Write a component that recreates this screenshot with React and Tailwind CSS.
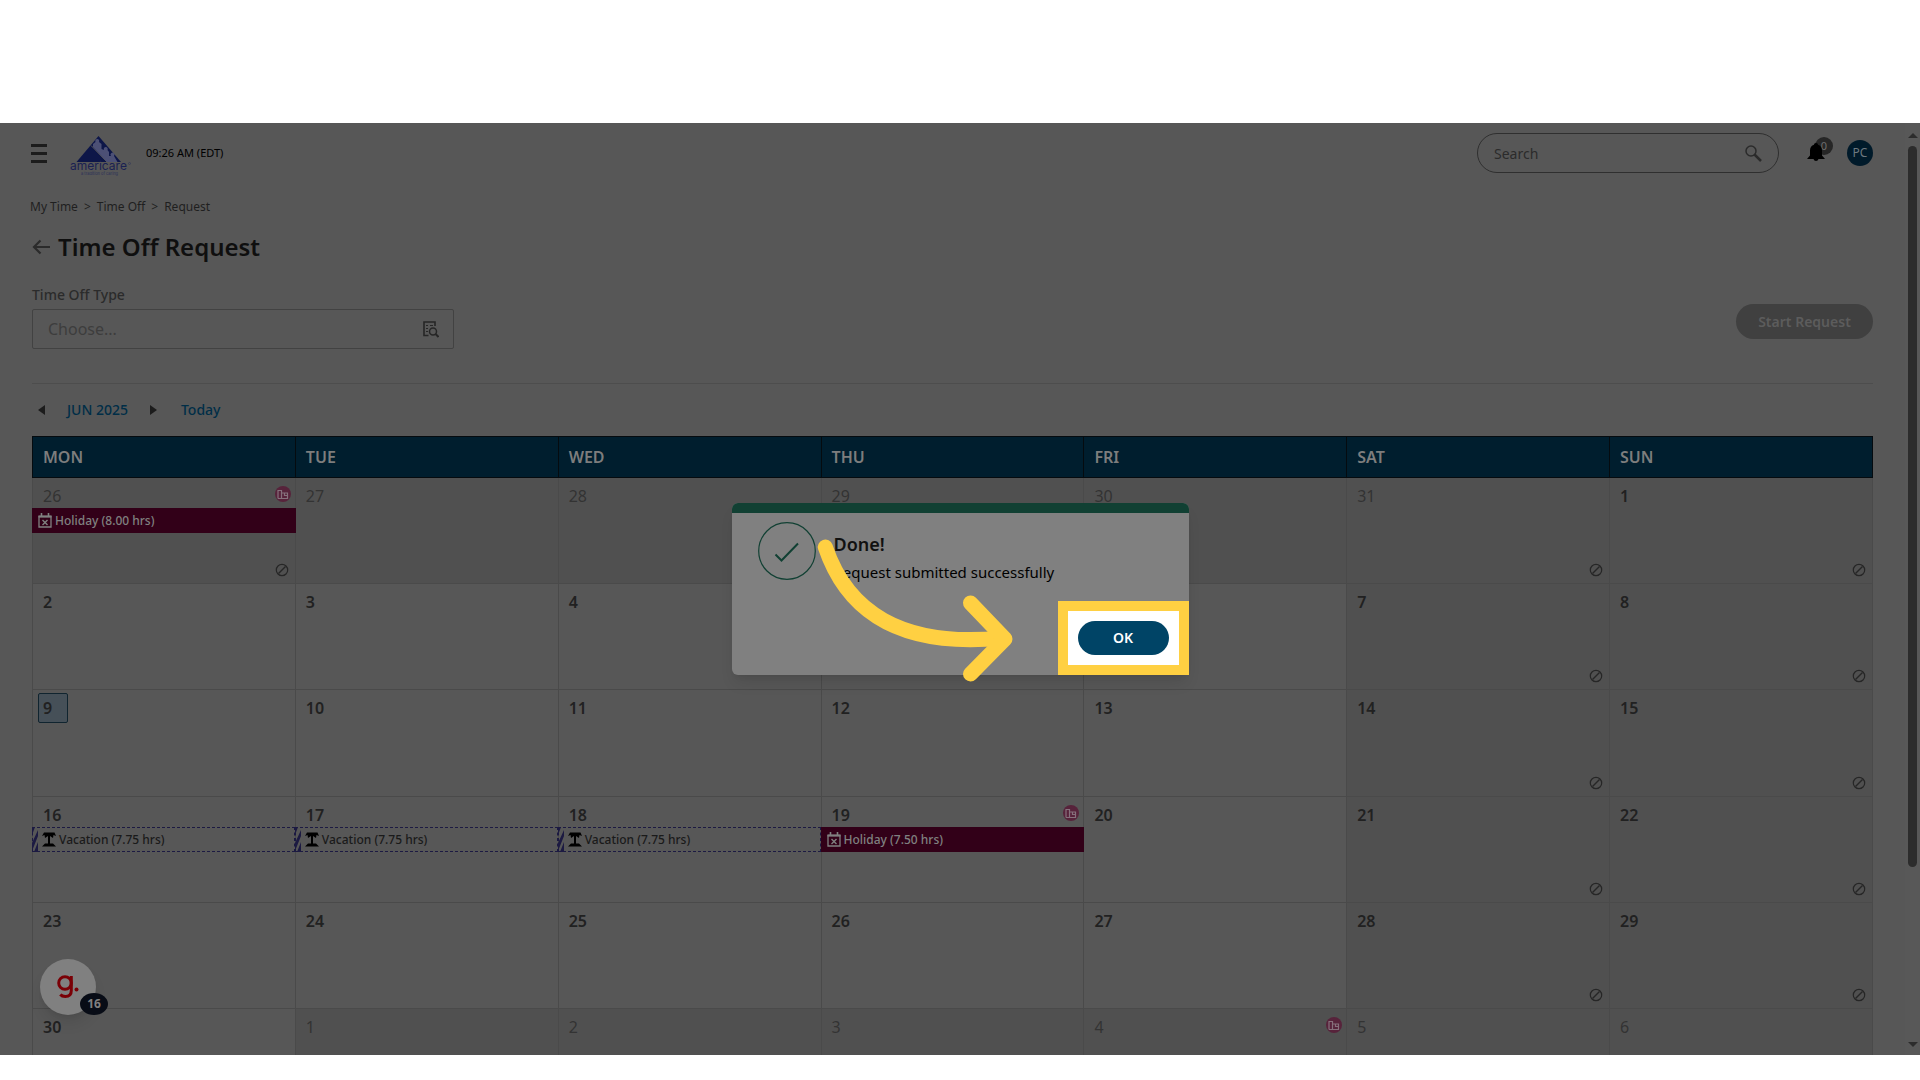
import React, { useState } from 'react';

const WEEKDAYS = ['MON', 'TUE', 'WED', 'THU', 'FRI', 'SAT', 'SUN'];

const HOLIDAY = 'holiday';
const VACATION = 'vacation';

// out = day belongs to another month, blocked = no requests allowed
const WEEKS = [
  [
    { day: 26, out: true, blocked: true, company: true, event: { type: HOLIDAY, label: 'Holiday (8.00 hrs)' } },
    { day: 27, out: true },
    { day: 28, out: true },
    { day: 29, out: true },
    { day: 30, out: true },
    { day: 31, out: true, blocked: true },
    { day: 1, weekend: true, blocked: true },
  ],
  [
    { day: 2 }, { day: 3 }, { day: 4 }, { day: 5 }, { day: 6 },
    { day: 7, weekend: true, blocked: true },
    { day: 8, weekend: true, blocked: true },
  ],
  [
    { day: 9, today: true }, { day: 10 }, { day: 11 }, { day: 12 }, { day: 13 },
    { day: 14, weekend: true, blocked: true },
    { day: 15, weekend: true, blocked: true },
  ],
  [
    { day: 16, event: { type: VACATION, label: 'Vacation (7.75 hrs)' } },
    { day: 17, event: { type: VACATION, label: 'Vacation (7.75 hrs)' } },
    { day: 18, event: { type: VACATION, label: 'Vacation (7.75 hrs)' } },
    { day: 19, company: true, event: { type: HOLIDAY, label: 'Holiday (7.50 hrs)' } },
    { day: 20 },
    { day: 21, weekend: true, blocked: true },
    { day: 22, weekend: true, blocked: true },
  ],
  [
    { day: 23 }, { day: 24 }, { day: 25 }, { day: 26 }, { day: 27 },
    { day: 28, weekend: true, blocked: true },
    { day: 29, weekend: true, blocked: true },
  ],
  [
    { day: 30 },
    { day: 1, out: true },
    { day: 2, out: true },
    { day: 3, out: true },
    { day: 4, out: true, company: true },
    { day: 5, out: true },
    { day: 6, out: true },
  ],
];

const Logo = () => (
  <svg width="62" height="46" viewBox="0 -6 62 46" role="img" aria-label="americare">
    <path d="M28.500 0 51 26H6.500z" fill="#0d1648" />
    <path d="M21 9.500 37 26" stroke="#575757" strokeWidth="1" />
    <path d="M23 11v-3l2.500-2a2 2 0 1 1 3.500 0l2.500 2v5l2.500 1a2 2 0 1 1 3.500 0l1.500 2v4l2 0a2 2 0 1 1 3 0l3.500 6H37z" fill="#4c5075" />
    <text x="0" y="34" fontSize="12" fontFamily="Inter, sans-serif" fill="#1a2152">americare</text>
    <text x="11" y="39" fontSize="4" fontFamily="Inter, sans-serif" fill="#2b3058">a tradition of caring</text>
    <circle cx="59.500" cy="27.500" r="1" fill="none" stroke="#2b3058" strokeWidth=".5" />
  </svg>
);

const BlockedIcon = () => (
  <svg width="14" height="14" viewBox="0 0 14 14" fill="none" stroke="#262626" className="absolute bottom-1.5 right-1.5">
    <circle cx="7" cy="7" r="5.700" strokeWidth="1.200" />
    <path d="M3.500 10.500 10.500 3.500" strokeWidth="1.500" />
  </svg>
);

const CompanyIcon = () => (
  <svg width="16" height="16" viewBox="0 0 16 16" className="absolute right-1 top-2">
    <circle cx="8" cy="8" r="8" fill="#57233b" />
    <path d="M3 12.500v-8h3.500v8M6.500 7h6v5.500H3M9.500 7v3M9.500 9.500h3" fill="none" stroke="#86707c" strokeWidth="1.200" />
  </svg>
);

const HolidayIcon = () => (
  <svg width="14" height="15" viewBox="0 0 14 15" fill="none" stroke="#808080">
    <path d="M1 3.500h12v10.500H1z" strokeWidth="1.300" />
    <path d="M.5 3.500h13" strokeWidth="2" />
    <path d="M3.500 0v4M10.500 0v4" strokeWidth="1.600" />
    <path d="m4.500 7 5 5M9.500 7l-5 5" strokeWidth="1.400" />
  </svg>
);

const PalmIcon = () => (
  <svg width="14" height="15" viewBox="0 0 14 15" fill="#000">
    <path d="M2 .5h10.500L14 4l-2.500-1-.5 3-3-2v7.500h3l3 3H0l3-3h3V4L3 6l-.5-3L0 4z" />
  </svg>
);

const EventBar = ({ event }) => {
  if (event.type === HOLIDAY) {
    return (
      <div className="-mx-px flex h-[25px] items-center gap-[3px] bg-[#320018] pl-[6px] text-xs font-medium text-[#808080]">
        <HolidayIcon />
        <span>{event.label}</span>
      </div>
    );
  }
  return (
    <div className="relative -ml-px flex h-[25px] items-center gap-[3px] border border-dashed border-[#1c1a42] pl-[9px] text-xs font-medium text-[#1a1a1a]">
      <svg width="6" height="25" viewBox="0 0 6 25" className="absolute -left-px -top-px">
        <path d="M0 0h3L0 8zM6 3v6L0 24v-8zM6 15v10H2z" fill="#1c1a42" />
      </svg>
      <PalmIcon />
      <span>{event.label}</span>
    </div>
  );
};

const DayCell = ({ day, out, weekend, blocked, company, today, event }) => (
  <td className={`relative border border-[#4a4a4a] p-0 align-top ${out || weekend ? 'bg-[#505050]' : ''}`}>
    <div className="flex h-[30px] items-start pl-[5px] pt-[3px]">
      <span
        className={`flex h-[30px] w-[30px] shrink-0 items-center ${out ? 'text-[#333]' : 'font-semibold text-[#212121]'} ${
          today ? 'rounded-xs border border-[#10242f] bg-[#465058] pl-1' : 'pl-[5px]'
        }`}
      >
        {day}
      </span>
    </div>
    {company && <CompanyIcon />}
    {event && <EventBar event={event} />}
    {blocked && <BlockedIcon />}
  </td>
);

const TopBar = () => (
  <header className="flex h-[60px] items-center pl-[31px] pr-8">
    <button aria-label="Menu" className="flex flex-col gap-[5px]">
      <span className="h-[3px] w-4 bg-[#1c1c1c]" />
      <span className="h-[3px] w-4 bg-[#1c1c1c]" />
      <span className="h-[3px] w-4 bg-[#1c1c1c]" />
    </button>
    <div className="ml-[23px]">
      <Logo />
    </div>
    <span className="ml-3.5 text-[11px] text-black">09:26 AM (EDT)</span>

    <label className="ml-auto flex h-10 w-[302px] items-center rounded-full border border-[#2f2f2f] pl-4 pr-4">
      <input type="text" placeholder="Search" aria-label="Search" className="min-w-0 flex-1 bg-transparent pt-0.5 text-sm outline-none placeholder:text-[#2b2b2b]" />
      <svg width="17" height="17" viewBox="0 0 17 17" fill="none" stroke="#2b2b2b">
        <circle cx="6" cy="6" r="5" strokeWidth="1.500" />
        <path d="m9.500 9.500 6.500 6.500" strokeWidth="2.500" />
      </svg>
    </label>
    <button aria-label="Notifications" className="relative ml-7 h-5 w-[18px]">
      <span className="absolute -top-1.5 left-2 flex size-[18px] items-center justify-center rounded-full bg-[#262626] text-[11px] text-[#6d6d6d]">0</span>
      <svg width="18" height="20" viewBox="0 0 18 20" className="relative">
        <path d="M9 0c1.200 0 2 .8 2 1.800 2.500.8 4 2.700 4 5.700v5l3 3.500h-6.500a2.600 2.600 0 0 1-5 0H0l3-3.500v-5c0-3 1.500-4.900 4-5.700C7 .8 7.800 0 9 0z" fill="#000" />
      </svg>
    </button>
    <button className="ml-[22px] flex size-[26px] items-center justify-center rounded-full bg-[#001a2a] text-xs text-[#6d7880]">PC</button>
  </header>
);

const DoneDialog = ({ onClose }) => (
  <div className="absolute inset-0 flex items-center justify-center">
    <div role="dialog" aria-labelledby="done-title" className="relative flex w-[457px] flex-col rounded-md bg-[#808080] shadow-lg">
      <div className="h-2.5 rounded-t-md bg-[#114033]" />
      <div className="flex h-[88px] gap-[18px] pl-[26px] pt-[9px]">
        <svg width="58" height="58" viewBox="0 0 58 58" fill="none" stroke="#114033">
          <circle cx="29" cy="29" r="28.300" strokeWidth="1.200" />
          <path d="m17.500 32.500 6 6L40 21.500" strokeWidth="2" />
        </svg>
        <div className="pt-2">
          <h2 id="done-title" className="text-lg font-semibold leading-7 text-[#111]">Done!</h2>
          <p className="text-[15px] leading-7 text-black">Request submitted successfully</p>
        </div>
      </div>
      <div className="self-end border-10 border-[#ffd042] bg-white p-2.5">
        <button onClick={onClose} className="block h-[34px] w-[91px] rounded-full bg-[#004466] text-sm font-semibold text-white">OK</button>
      </div>
      <svg width="210" height="160" viewBox="0 0 210 160" fill="none" stroke="#ffd042" strokeWidth="15" strokeLinecap="round" strokeLinejoin="round" className="pointer-events-none absolute left-20 top-[30px]">
        <path d="M13.300 14C35 78 88 115 190 105" />
        <path d="M158.500 70 193 106 158.500 141" />
      </svg>
    </div>
  </div>
);

const Scrollbar = () => (
  <div className="flex w-[15px] flex-col items-center bg-[#585858] pb-2 pt-2.5">
    <svg width="10" height="5" viewBox="0 0 10 5" fill="#2c2c2c"><path d="M0 5 5 0l5 5z" /></svg>
    <div className="mt-2 h-[721px] w-[9px] rounded-full bg-[#2c2c2c]" />
    <svg width="10" height="5" viewBox="0 0 10 5" fill="#2c2c2c" className="mt-auto"><path d="M0 0h10L5 5z" /></svg>
  </div>
);

export default function App() {
  const [open, setOpen] = useState(true);

  return (
    <div className="flex h-screen flex-col bg-white pb-[25px] pt-[123px] font-['Noto_Sans',sans-serif]">
      <div className="relative flex min-h-0 flex-1 overflow-hidden bg-[#575757]">
        <div className="min-w-0 flex-1">
          <TopBar />

          <nav aria-label="Breadcrumb" className="flex h-12 items-center gap-1.5 pl-[30px] text-xs text-[#1f1f1f]">
            <a href="#time">My Time</a>
            <span>&gt;</span>
            <a href="#off">Time Off</a>
            <span>&gt;</span>
            <span>Request</span>
          </nav>

          <main className="px-8">
            <div className="flex h-8 items-center gap-[7px]">
              <button aria-label="Back">
                <svg width="19" height="16" viewBox="0 0 19 16" fill="none" stroke="#2b2b2b" strokeWidth="2.200">
                  <path d="M18 8H2M8.500 1.500 2 8l6.500 6.500" />
                </svg>
              </button>
              <h1 className="text-2xl font-semibold text-[#0f0f0f]">Time Off Request</h1>
            </div>

            <div className="flex items-end justify-between pt-[22px]">
              <div className="w-[422px]">
                <label htmlFor="type" className="block h-6 text-sm font-medium text-[#2b2b2b]">Time Off Type</label>
                <div className="flex h-10 items-center rounded-xs border border-[#424242] pl-[15px] pr-3.5">
                  <input id="type" placeholder="Choose..." className="min-w-0 flex-1 bg-transparent text-base outline-none placeholder:text-[#3d3d3d]" />
                  <svg width="16" height="17" viewBox="0 0 16 17" fill="none" stroke="#262626">
                    <path d="M5.500 14.500H1V1h11v4" strokeWidth="1.600" />
                    <path d="M3 4.500h2M3 7.500h2M3 10.500h2M7 4.500h3" strokeWidth="1.200" />
                    <circle cx="10" cy="10.500" r="3.500" strokeWidth="1.500" />
                    <path d="m12.500 13 3 3" strokeWidth="2" />
                  </svg>
                </div>
              </div>
              <button disabled className="mb-2.5 h-[35px] w-[137px] rounded-full bg-[#404040] text-sm font-semibold text-[#5c5c5c]">Start Request</button>
            </div>

            <div className="mt-[34px] flex h-[53px] items-center border-t border-[#4d4d4d] pl-1.5 text-sm font-medium text-[#002e47]">
              <button aria-label="Previous month">
                <svg width="7" height="10" viewBox="0 0 7 10" fill="#1c1c1c"><path d="M7 0v10L0 5z" /></svg>
              </button>
              <button className="ml-[22px]">JUN 2025</button>
              <button aria-label="Next month" className="ml-[22px]">
                <svg width="7" height="10" viewBox="0 0 7 10" fill="#1c1c1c"><path d="M0 0v10l7-5z" /></svg>
              </button>
              <button className="ml-6">Today</button>
            </div>

            <table className="w-full table-fixed border-collapse text-base">
              <thead>
                <tr className="h-[41px] bg-[#001e2e] text-left text-[#7d7d7d]">
                  {WEEKDAYS.map((name) => (
                    <th key={name} className="border border-[#050b0f] py-0 pl-2.5 font-semibold">{name}</th>
                  ))}
                </tr>
              </thead>
              <tbody>
                {WEEKS.map((week, idx) => (
                  <tr key={idx} className="h-[106px] nth-3:h-[107px]">
                    {week.map((cell) => (
                      <DayCell key={cell.day} {...cell} />
                    ))}
                  </tr>
                ))}
              </tbody>
            </table>
          </main>
        </div>

        <Scrollbar />

        <button aria-label="Guides" className="absolute bottom-10 left-10 size-14 rounded-full bg-[#808080] shadow-lg">
          <svg width="22" height="24" viewBox="0 0 22 24" fill="none" stroke="#7a0006" strokeWidth="3" className="mx-auto">
            <circle cx="8" cy="8" r="6.300" />
            <path d="M14.300 1v14.500c0 4-2.500 6-6 6-2.300 0-4-.8-5-2" />
            <circle cx="19.500" cy="14.500" r="2" fill="#7a0006" stroke="none" />
          </svg>
          <span className="absolute bottom-0 left-10 flex h-[22px] w-7 items-center justify-center rounded-[50%] bg-[#080c16] text-xs font-bold text-[#808080]">16</span>
        </button>

        {open && <DoneDialog onClose={() => setOpen(false)} />}
      </div>
    </div>
  );
}
